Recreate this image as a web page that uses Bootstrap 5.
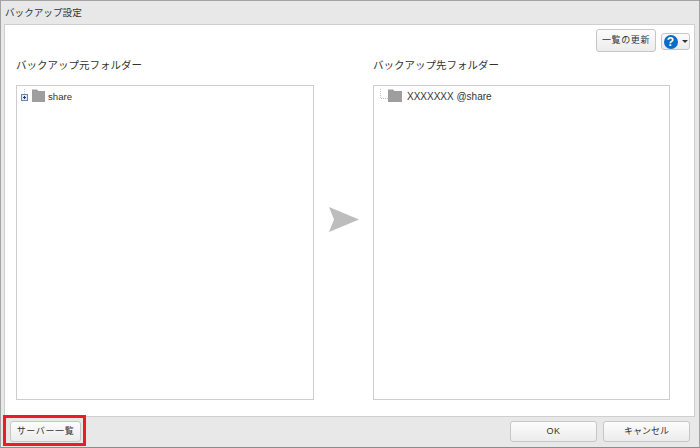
<!DOCTYPE html>
<html lang="ja">
<head>
    <meta charset="UTF-8">
    <meta name="viewport" content="width=device-width, initial-scale=1.0">
    <title>バックアップ設定</title>
    <link href="https://cdn.jsdelivr.net/npm/bootstrap@5.3.3/dist/css/bootstrap.min.css" rel="stylesheet">
    <style>
        html, body {
            height: 448px;
            overflow: hidden;
        }
        body {
            background-color: #e8e8e8;
            font-family: "Liberation Sans", "Noto Sans CJK JP", sans-serif;
            color: #333;
        }
        .dialog-win {
            height: 448px;
            border: 1px solid #a3a3a3;
            border-bottom-color: #8c8c8c;
        }
        .dialog-title {
            height: 23px;
            padding-left: 4px;
            font-size: 9.6px;
            line-height: 23px;
        }
        .dialog-body {
            height: 393px;
            margin: 0 4px 0 3px;
            background-color: #fff;
            border: 1px solid #cfcfcf;
        }
        .tool-row {
            height: 34px;
            padding: 4px 4px 0 0;
            gap: 5px;
        }
        .ui-btn {
            font-size: 9px;
            line-height: 1;
            color: #333;
            padding: 0;
            border: 1px solid #c6c6c6;
            border-radius: 3px;
            background: linear-gradient(#fcfcfc, #ececec);
            letter-spacing: 0.6px;
        }
        .btn-refresh {
            width: 60px;
            height: 23px;
        }
        .btn-help {
            width: 29px;
            height: 17px;
            margin-top: 4px;
        }
        .help-dot {
            width: 14px;
            height: 14px;
            border-radius: 50%;
            background-color: #0a6cc4;
            color: #fff;
            font-size: 12px;
            font-weight: 700;
            line-height: 14px;
            letter-spacing: 0;
        }
        .help-caret {
            width: 0;
            height: 0;
            border-left: 3px solid transparent;
            border-right: 3px solid transparent;
            border-top: 3px solid #333;
        }
        .pane-row {
            padding-left: 11px;
        }
        .pane-src {
            width: 298px;
        }
        .pane-dst {
            width: 297px;
        }
        .pane-label {
            height: 26px;
            font-size: 10.5px;
            line-height: 12px;
        }
        .tree-box {
            height: 315px;
            border: 1px solid #cdcdcd;
            font-size: 10px;
            color: #333;
        }
        .tree-row {
            height: 16px;
            padding-top: 4px;
            line-height: 16px;
        }
        .name-src {
            margin-left: 1px;
            padding-top: 1px;
            font-size: 9.6px;
        }
        .name-dst {
            margin-left: 5px;
            padding-top: 1px;
        }
        .arrow-col {
            width: 59px;
            padding-bottom: 21px;
        }
        .dialog-foot {
            height: 30px;
            padding: 4px 9px 0 9px;
        }
        .btn-foot {
            width: 87px;
            height: 21px;
        }
        .btn-server {
            width: 71px;
            height: 21px;
        }
        .btn-tight {
            letter-spacing: 0;
        }
        .foot-gap {
            margin-left: 6px;
        }
        .red-mark {
            position: absolute;
            left: 3px;
            top: 415px;
            width: 83px;
            height: 31px;
            border: 3px solid #ed1c24;
        }
    </style>
</head>
<body>
    <div class="dialog-win d-flex flex-column">
        <div class="dialog-title">バックアップ設定</div>
        <div class="dialog-body">
            <div class="tool-row d-flex justify-content-end align-items-start">
                <button type="button" class="btn ui-btn btn-refresh">一覧の更新</button>
                <button type="button" class="btn ui-btn btn-help d-flex align-items-center justify-content-center gap-1">
                    <span class="help-dot">?</span>
                    <span class="help-caret"></span>
                </button>
            </div>
            <div class="pane-row d-flex">
                <div class="pane-src">
                    <div class="pane-label">バックアップ元フォルダー</div>
                    <div class="tree-box">
                        <div class="tree-row d-flex align-items-center">
                            <svg width="30" height="14" viewBox="0 0 30 14">
                                <path d="M7.500 0v5" stroke="#c4c4c4" stroke-dasharray="1 1" fill="none"/>
                                <rect x="4.500" y="5.500" width="6" height="6" fill="#dfe8f5" stroke="#6f86a8"/>
                                <path d="M6 8.500h3M7.500 7v3" stroke="#1f3a6b"/>
                                <path d="M15 0.500h5l1.500 1.500h6.500v11h-13z" fill="#9e9e9e"/>
                            </svg>
                            <span class="name-src">share</span>
                        </div>
                    </div>
                </div>
                <div class="arrow-col d-flex align-items-center justify-content-center">
                    <svg width="30" height="25" viewBox="0 0 30 25">
                        <path d="M0 0L30 12.500L0 25L5 12.500z" fill="#bdbdbd"/>
                    </svg>
                </div>
                <div class="pane-dst">
                    <div class="pane-label">バックアップ先フォルダー</div>
                    <div class="tree-box">
                        <div class="tree-row d-flex align-items-center">
                            <svg width="28" height="14" viewBox="0 0 28 14">
                                <path d="M6.500 0v9.500h7.500" stroke="#c4c4c4" stroke-dasharray="1 1" fill="none"/>
                                <path d="M14 0.500h5l1.500 1.500h7.500v11h-14z" fill="#9e9e9e"/>
                            </svg>
                            <span class="name-dst">XXXXXXX&nbsp;@share</span>
                        </div>
                    </div>
                </div>
            </div>
        </div>
        <div class="dialog-foot d-flex align-items-start">
            <button type="button" class="btn ui-btn btn-server">サーバー一覧</button>
            <button type="button" class="btn ui-btn btn-foot ms-auto">OK</button>
            <button type="button" class="btn ui-btn btn-foot btn-tight foot-gap">キャンセル</button>
        </div>
    </div>
    <div class="red-mark"></div>
    <script src="https://cdn.jsdelivr.net/npm/bootstrap@5.3.3/dist/js/bootstrap.bundle.min.js"></script>
</body>
</html>
